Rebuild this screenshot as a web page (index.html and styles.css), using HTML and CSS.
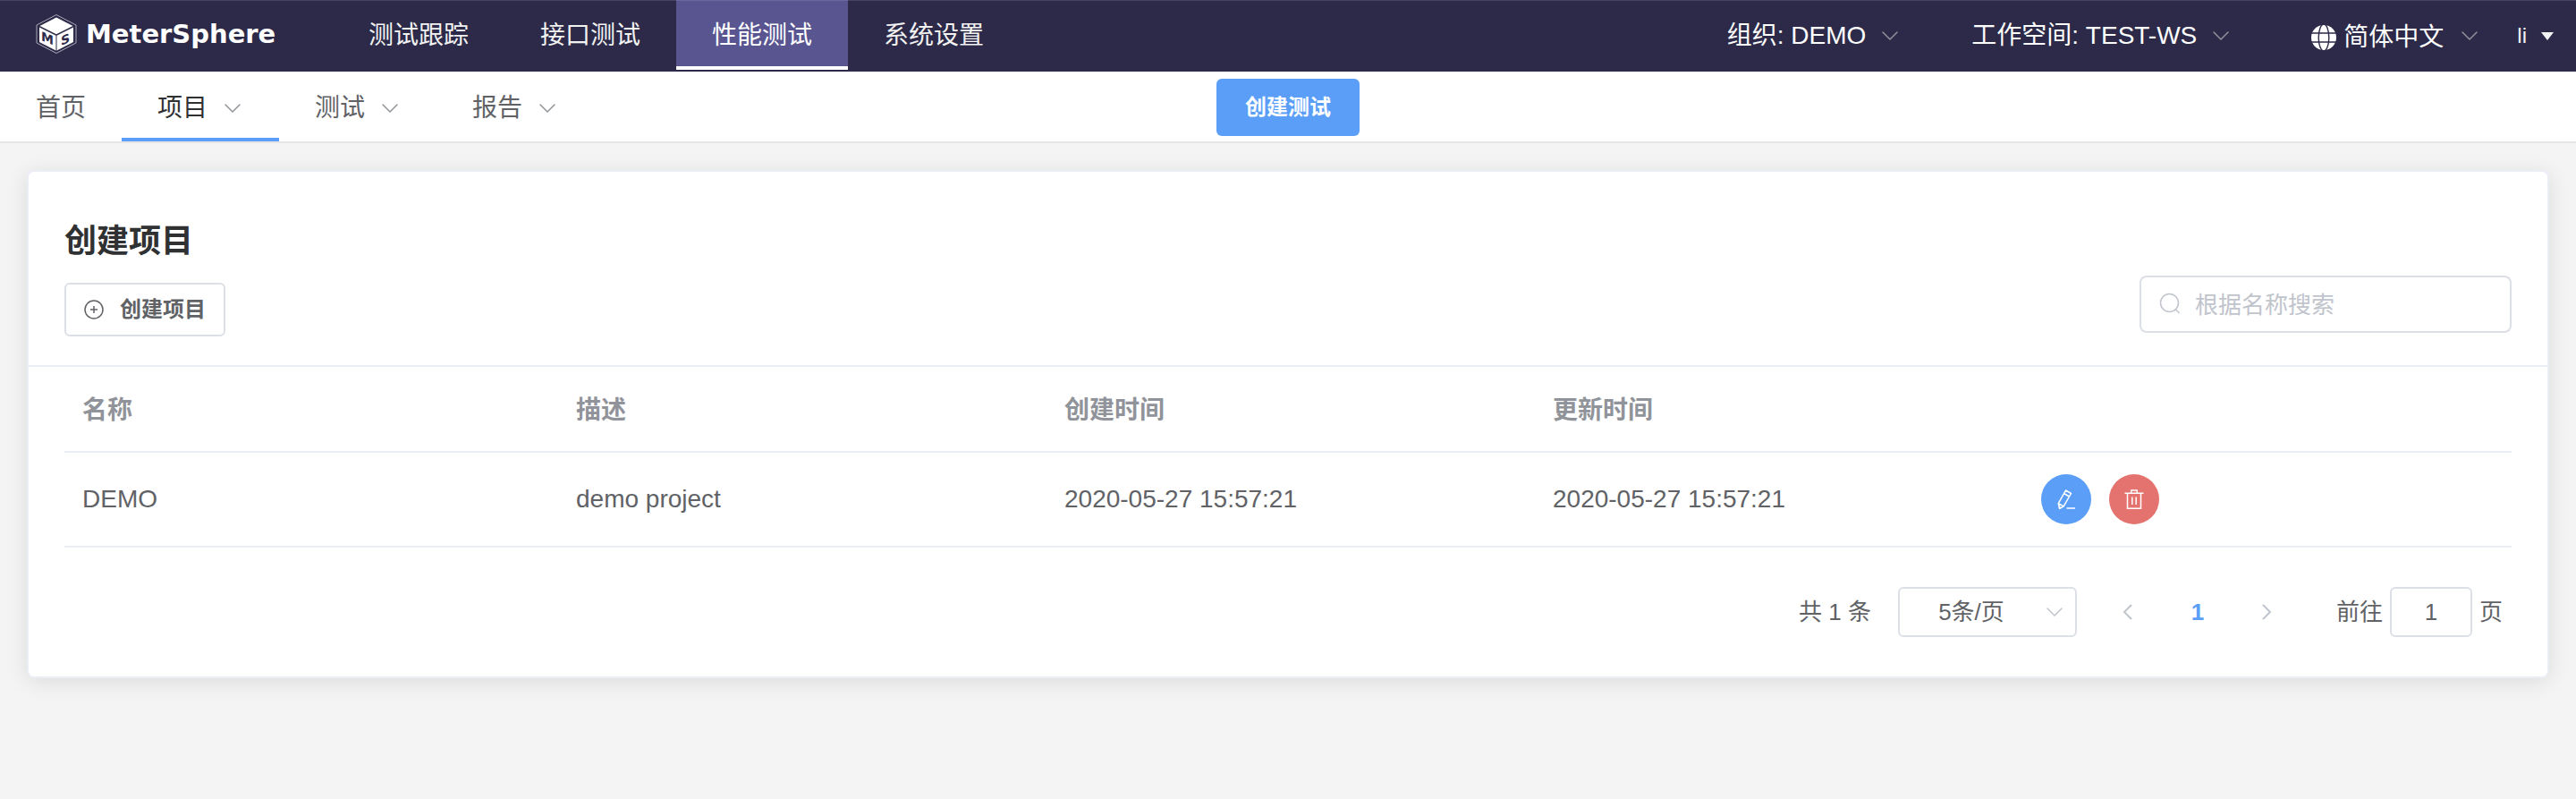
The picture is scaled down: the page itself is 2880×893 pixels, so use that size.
FILE: index.html
```html
<!DOCTYPE html>
<html lang="zh-CN">
<head>
<meta charset="utf-8">
<title>MeterSphere</title>
<link rel="stylesheet" href="styles.css">
</head>
<body>
<svg class="sprite" aria-hidden="true">
  <symbol id="chevron" viewBox="0 0 18 10"><path d="M1 1l8 8 8-8" fill="none" stroke="currentColor" stroke-width="1.5" stroke-linecap="round" stroke-linejoin="round"/></symbol>
</svg>

<header class="topbar">
  <a class="logo" href="#">
    <svg class="logo-mark" viewBox="0 0 46 46" aria-hidden="true">
      <path d="M23 1.500L45 13v20L23 44.500 1 33V13z" fill="none" stroke="#a9a8b8" stroke-width="1"/>
      <path d="M23 4.500l18.500 9.500L23 23.200 4.500 14z" fill="#fff"/>
      <path d="M4 15.500l18.500 9.300V41.500L4 32z" fill="#fff"/>
      <path d="M42 15.500l-18.500 9.300V41.500L42 32z" fill="#fff"/>
      <text class="mark-letter" transform="translate(6 30) skewY(22)">M</text>
      <text class="mark-letter" transform="translate(28 36) skewY(-22)">S</text>
    </svg>
    <span class="logo-name">MeterSphere</span>
  </a>
  <nav class="modules">
    <a class="module" href="#">测试跟踪</a>
    <a class="module" href="#">接口测试</a>
    <a class="module active" href="#">性能测试</a>
    <a class="module" href="#">系统设置</a>
  </nav>
  <div class="account">
    <button class="picker" type="button">组织: DEMO<svg class="chevron"><use href="#chevron"/></svg></button>
    <button class="picker" type="button">工作空间: TEST-WS<svg class="chevron"><use href="#chevron"/></svg></button>
    <button class="picker language" type="button">
      <svg class="globe" viewBox="0 0 28 28" aria-hidden="true">
        <circle cx="14" cy="14" r="14" fill="#fff"/>
        <path d="M0 9h28M0 19h28" stroke="#2c2a48" stroke-width="1.400"/>
        <ellipse cx="14" cy="14" rx="5.800" ry="15" fill="none" stroke="#2c2a48" stroke-width="1.400"/>
      </svg>
      <span class="language-name">简体中文</span><svg class="chevron"><use href="#chevron"/></svg></button>
    <button class="user" type="button">li<svg class="caret" viewBox="0 0 14 9"><path d="M0 0h14L7 9z" fill="currentColor"/></svg></button>
  </div>
</header>

<div class="subbar">
  <nav class="sections">
    <a class="section home" href="#">首页</a>
    <button class="section active" type="button">项目<svg class="chevron"><use href="#chevron"/></svg></button>
    <button class="section" type="button">测试<svg class="chevron"><use href="#chevron"/></svg></button>
    <button class="section" type="button">报告<svg class="chevron"><use href="#chevron"/></svg></button>
  </nav>
  <button class="create-test" type="button">创建测试</button>
</div>

<main class="card">
  <div class="card-head">
    <div>
      <h1 class="title">创建项目</h1>
      <button class="create-project" type="button">
        <svg class="plus" viewBox="0 0 22 22" fill="none" stroke="currentColor" stroke-width="1.500" aria-hidden="true"><circle cx="11" cy="11" r="10"/><path d="M11 7v8M7 11h8"/></svg>
        创建项目
      </button>
    </div>
    <label class="search">
      <svg class="search-icon" viewBox="0 0 24 24" fill="none" stroke="currentColor" stroke-width="1.500" aria-hidden="true"><circle cx="11.500" cy="11.500" r="10"/><path d="M18 18.500l4.500 4.500"/></svg>
      <input class="search-input" type="text" placeholder="根据名称搜索" aria-label="根据名称搜索">
    </label>
  </div>
  <div class="card-body">
    <table class="projects">
      <thead>
        <tr><th class="name-col">名称</th><th>描述</th><th>创建时间</th><th>更新时间</th><th></th></tr>
      </thead>
      <tbody>
        <tr>
          <td>DEMO</td><td>demo project</td><td>2020-05-27 15:57:21</td><td>2020-05-27 15:57:21</td>
          <td>
            <div class="actions">
              <button class="action edit" type="button" aria-label="编辑">
                <svg class="action-icon" viewBox="0 0 24 24" fill="none" stroke="currentColor" stroke-width="1.500" stroke-linejoin="round" aria-hidden="true"><path d="M11.500 2l6 3.500-8.300 14.400L4.500 22.500l-1.200-5.800zM9.500 5.500l6 3.500M3.300 16.700l5.900 3.200M3.800 20.200l2 1.200M12.500 22h9.500"/></svg>
              </button>
              <button class="action delete" type="button" aria-label="删除">
                <svg class="action-icon" viewBox="0 0 24 24" fill="none" stroke="currentColor" stroke-width="1.500" aria-hidden="true"><path d="M1.500 5.200h21M4.500 5.200V22.300h15V5.200M8.700 5V2h6.600v3M9.800 9.500v8.500M14.200 9.500v8.500"/></svg>
              </button>
            </div>
          </td>
        </tr>
      </tbody>
    </table>
    <div class="pagination">
      <span class="total">共 1 条</span>
      <span class="page-size">
        <select class="size-select" aria-label="每页条数"><option>5条/页</option></select>
        <svg class="chevron size-chevron"><use href="#chevron"/></svg>
      </span>
      <button class="step" type="button" aria-label="上一页"><svg class="arrow" viewBox="0 0 11 18" fill="none" stroke="currentColor" stroke-width="2"><path d="M10 1L2 9l8 8"/></svg></button>
      <button class="page" type="button">1</button>
      <button class="step" type="button" aria-label="下一页"><svg class="arrow" viewBox="0 0 11 18" fill="none" stroke="currentColor" stroke-width="2"><path d="M1 1l8 8-8 8"/></svg></button>
      <label class="jump">前往<input class="jump-input" type="text" value="1">页</label>
    </div>
  </div>
</main>
</body>
</html>
```

FILE: styles.css
```css
* { box-sizing: border-box; }

body {
  margin: 0;
  min-height: 100vh;
  background: #f4f4f4;
  color: #606266;
  font-family: "Liberation Sans", "Noto Sans CJK SC", sans-serif;
  font-size: 28px;
  line-height: 40px;
}

button, input, select {
  margin: 0;
  padding: 0;
  border: 0;
  background: none;
  color: inherit;
  font: inherit;
}

button { cursor: pointer; }
a { color: inherit; text-decoration: none; }
svg { display: block; flex: none; }
.sprite { position: absolute; width: 0; height: 0; }
.chevron { width: 18px; height: 10px; color: #909399; }

/* Top bar */
.topbar {
  display: flex;
  align-items: flex-start;
  height: 80px;
  background: #2c2a48;
  box-shadow: inset 0 1px #45435d;
  color: #fff;
}

.logo {
  display: flex;
  align-items: center;
  gap: 10px;
  width: 372px;
  height: 76px;
  padding-left: 40px;
}

.logo-mark { width: 46px; height: 46px; }
.mark-letter { fill: #2c2a48; font: 700 14px "DejaVu Sans", sans-serif; }
.logo-name { font: 700 29px/40px "DejaVu Sans", sans-serif; }
.modules { display: flex; }

.module {
  height: 78px;
  padding: 2px 40px 0;
  border-bottom: 4px solid transparent;
  color: #f2f2f2;
  line-height: 76px;
}

.module.active {
  border-color: #fff;
  background: #595591;
  box-shadow: inset 0 1px #6b679d;
  color: #fff;
}

.account {
  display: flex;
  align-items: center;
  height: 80px;
  margin-left: auto;
  padding-right: 25px;
}

.picker { display: flex; align-items: center; gap: 18px; margin-right: 82px; }
.language { gap: 8px; margin: 0 44px 0 10px; }
.language-name { padding: 4px 12px 0 0; }
.globe { width: 28px; height: 28px; margin-top: 4px; }
.user { display: flex; align-items: center; gap: 16px; color: #f2f2f2; font-size: 24px; }
.caret { width: 14px; height: 9px; }

/* Section bar */
.subbar {
  display: grid;
  grid-template-columns: 1fr auto 1fr;
  align-items: center;
  height: 80px;
  border-bottom: 2px solid #e6e6e6;
  background: #fff;
}

.sections { display: flex; }

.section {
  display: flex;
  align-items: center;
  gap: 19px;
  height: 78px;
  padding: 8px 43px 0 40px;
  border-bottom: 4px solid transparent;
}

.section.home { padding: 8px 40px 0; }
.section.active { border-bottom-color: #5a9ef8; color: #303133; }

.create-test {
  width: 160px;
  height: 64px;
  margin-top: 2px;
  border-radius: 6px;
  background: #5a9ef8;
  color: #fff;
  font-size: 24px;
  font-weight: 700;
}

/* Project card */
.card {
  margin: 30px;
  border: 2px solid #ebeef5;
  border-radius: 8px;
  background: #fff;
  box-shadow: 0 4px 24px rgba(0, 0, 0, 0.1);
}

.card-head {
  display: flex;
  align-items: flex-end;
  justify-content: space-between;
  padding: 52px 40px 32px;
  border-bottom: 2px solid #ebeef5;
}

.title {
  margin: 0 0 20px;
  color: #303133;
  font-size: 36px;
  line-height: 52px;
}

.create-project {
  display: flex;
  align-items: center;
  justify-content: center;
  gap: 18px;
  width: 180px;
  height: 60px;
  border: 2px solid #dcdfe6;
  border-radius: 6px;
  font-size: 24px;
  font-weight: 700;
}

.plus { width: 22px; height: 22px; }

.search {
  display: flex;
  align-items: center;
  gap: 16px;
  width: 416px;
  height: 64px;
  margin-bottom: 4px;
  padding: 2px 20px 0;
  border: 2px solid #dcdfe6;
  border-radius: 8px;
  color: #c0c4cc;
  font-size: 26px;
}

.search-icon { width: 24px; height: 24px; margin-bottom: 4px; }
.search-input { flex: 1; min-width: 0; outline: 0; color: #606266; }
.search-input::placeholder { color: #c0c4cc; opacity: 1; }

.card-body { padding: 0 40px 44px; }

.projects {
  width: 100%;
  border-collapse: separate;
  border-spacing: 0;
  table-layout: fixed;
}

.projects th, .projects td {
  padding: 24px 20px;
  border-bottom: 2px solid #ebeef5;
  text-align: left;
}

.projects th { padding: 29px 20px 25px; color: #909399; }
.projects .name-col { width: 552px; }
.actions { display: flex; gap: 20px; }

.action {
  display: flex;
  align-items: center;
  justify-content: center;
  width: 56px;
  height: 56px;
  border-radius: 50%;
  color: #fff;
}

.edit { background: #5a9ef8; }
.delete { background: #e4736f; }
.action-icon { width: 24px; height: 24px; }

/* Pagination */
.pagination {
  display: flex;
  align-items: center;
  justify-content: flex-end;
  margin-top: 44px;
  padding-right: 10px;
  font-size: 26px;
}

.total { margin-right: 30px; }
.page-size { display: grid; align-items: center; width: 200px; margin-right: 18px; }

.size-select {
  grid-area: 1 / 1;
  width: 100%;
  height: 56px;
  padding-right: 36px;
  border: 2px solid #dcdfe6;
  border-radius: 6px;
  appearance: none;
  text-align: center;
  text-align-last: center;
}

.size-chevron { grid-area: 1 / 1; justify-self: end; margin-right: 16px; color: #c0c4cc; pointer-events: none; }

.step, .page {
  display: flex;
  align-items: center;
  justify-content: center;
  width: 78px;
  height: 56px;
}

.step { color: #c0c4cc; }
.arrow { width: 11px; height: 18px; }
.page { color: #5a9ef8; font-weight: 700; }
.jump { display: flex; align-items: center; gap: 8px; margin-left: 38px; }

.jump-input {
  width: 92px;
  height: 56px;
  border: 2px solid #dcdfe6;
  border-radius: 6px;
  text-align: center;
}
```
